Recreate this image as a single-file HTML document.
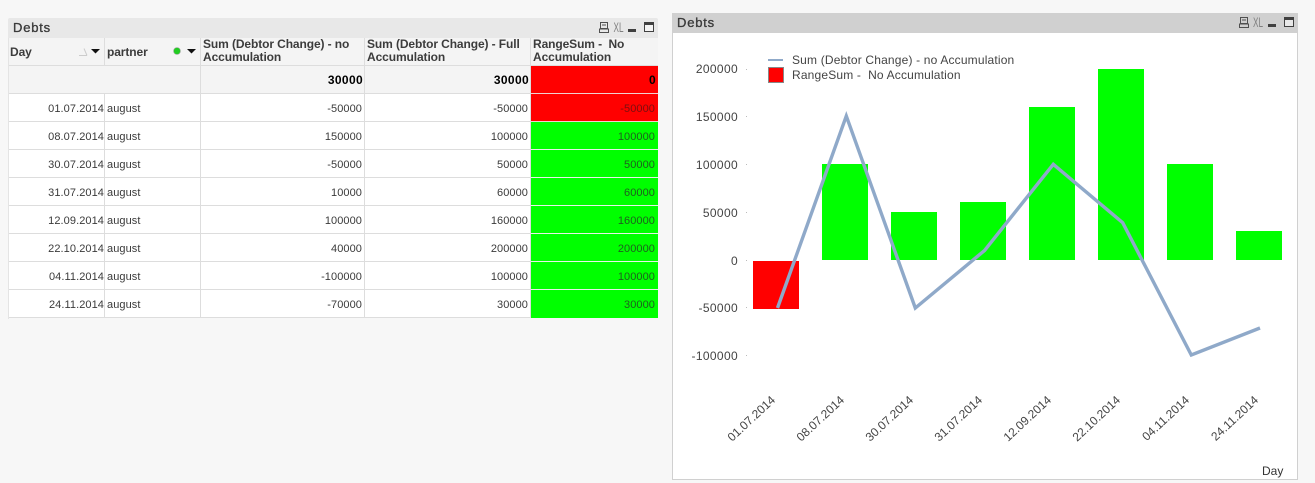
<!DOCTYPE html>
<html><head><meta charset="utf-8"><style>
html,body{margin:0;padding:0;width:1315px;height:483px;overflow:hidden;background:#f7f7f7}
body{position:relative;font-family:"Liberation Sans",sans-serif}
div{position:absolute;box-sizing:border-box;white-space:nowrap}
.t{font-size:13px;letter-spacing:.8px;color:#3a3a3a;font-weight:400;-webkit-text-stroke:.35px #3a3a3a}
.h{top:38px;height:27px;background:#f4f4f4;font-size:12px;letter-spacing:-.1px;font-weight:700;color:#3c3c3c;line-height:13px;padding:0 0 0 2px}
.c{height:28px;line-height:30px;font-size:11px;letter-spacing:.08px;color:#3a3a3a;text-align:right;padding-right:2px;background:#fff;border-bottom:1px solid #ddd;border-right:1px solid #ddd}
.s{background:#f4f4f4;font-weight:700;color:#000;font-size:12px;padding-right:1px;letter-spacing:.35px;line-height:29px}
.g{background:#0f0;color:#1f5f1f;border-right:0;border-bottom:1px solid #e8f0e8;padding-right:3px}
.r{background:#f00;color:#7a1010;border-right:0;border-bottom:1px solid #f0d0d0;padding-right:3px}
</style></head><body>
<div style="left:8px;top:18px;width:650px;height:20px;background:#e8e8e8;border-radius:2px 2px 0 0"></div>
<div class="t" style="left:13px;top:20px">Debts</div>
<svg style="position:absolute;left:596px;top:20px" width="62" height="14" viewBox="0 0 62 14">
<g fill="none" stroke="#505050" stroke-width="1"><rect x="4.500" y="2.500" width="7" height="6"/><path d="M6 5h4"/><path d="M3.500 12.500h9v-3.500h-9z"/></g>
<text x="17.500" y="12" font-family="Liberation Sans" font-size="14" fill="#808080" textLength="10" lengthAdjust="spacingAndGlyphs">XL</text>
<rect x="32" y="9" width="8" height="3" fill="#404040"/>
<rect x="48.500" y="2.500" width="9" height="9" fill="#f4f4f4" stroke="#404040"/><rect x="48" y="2" width="10" height="3" fill="#404040"/>
</svg>

<div class="h" style="left:8px;width:96px;line-height:28px">Day</div>
<div class="h" style="left:105px;width:95px;line-height:28px">partner</div>
<div class="h" style="left:201px;width:163px">Sum (Debtor Change) - no<br>Accumulation</div>
<div class="h" style="left:365px;width:165px">Sum (Debtor Change) - Full<br>Accumulation</div>
<div class="h" style="left:531px;width:127px">RangeSum -&nbsp; No<br>Accumulation</div>
<div style="left:8px;top:65px;width:650px;height:1px;background:#ddd"></div>
<div style="left:104px;top:38px;width:1px;height:28px;background:#ddd"></div>
<div style="left:200px;top:38px;width:1px;height:28px;background:#ddd"></div>
<div style="left:364px;top:38px;width:1px;height:28px;background:#ddd"></div>
<div style="left:530px;top:38px;width:1px;height:28px;background:#ddd"></div>
<svg style="position:absolute;left:78px;top:46px" width="120" height="12" viewBox="0 0 120 12">
<path d="M1 9.500h8M9 9.500l-3-7" fill="none" stroke="#ccc"/><path d="M13 3h9l-4.500 4.500z" fill="#111"/>
<circle cx="99" cy="5" r="3.500" fill="#22cc22" stroke="#aaa" stroke-width=".6"/><path d="M109 3h9l-4.500 4.500z" fill="#111"/></svg>

<div class="c s" style="left:8px;top:66px;width:193px"></div>
<div class="c s" style="left:201px;top:66px;width:164px">30000</div>
<div class="c s" style="left:365px;top:66px;width:166px">30000</div>
<div class="c s r" style="left:531px;top:66px;color:#000;padding-right:2px;width:127px">0</div>

<div class="c" style="left:8px;top:94px;width:97px;padding-right:0">01.07.2014</div><div class="c" style="left:105px;top:94px;width:96px;text-align:left;padding-left:2px">august</div><div class="c" style="left:201px;top:94px;width:164px">-50000</div><div class="c" style="left:365px;top:94px;width:166px">-50000</div><div class="c r" style="left:531px;top:94px;width:127px">-50000</div>
<div class="c" style="left:8px;top:122px;width:97px;padding-right:0">08.07.2014</div><div class="c" style="left:105px;top:122px;width:96px;text-align:left;padding-left:2px">august</div><div class="c" style="left:201px;top:122px;width:164px">150000</div><div class="c" style="left:365px;top:122px;width:166px">100000</div><div class="c g" style="left:531px;top:122px;width:127px">100000</div>
<div class="c" style="left:8px;top:150px;width:97px;padding-right:0">30.07.2014</div><div class="c" style="left:105px;top:150px;width:96px;text-align:left;padding-left:2px">august</div><div class="c" style="left:201px;top:150px;width:164px">-50000</div><div class="c" style="left:365px;top:150px;width:166px">50000</div><div class="c g" style="left:531px;top:150px;width:127px">50000</div>
<div class="c" style="left:8px;top:178px;width:97px;padding-right:0">31.07.2014</div><div class="c" style="left:105px;top:178px;width:96px;text-align:left;padding-left:2px">august</div><div class="c" style="left:201px;top:178px;width:164px">10000</div><div class="c" style="left:365px;top:178px;width:166px">60000</div><div class="c g" style="left:531px;top:178px;width:127px">60000</div>
<div class="c" style="left:8px;top:206px;width:97px;padding-right:0">12.09.2014</div><div class="c" style="left:105px;top:206px;width:96px;text-align:left;padding-left:2px">august</div><div class="c" style="left:201px;top:206px;width:164px">100000</div><div class="c" style="left:365px;top:206px;width:166px">160000</div><div class="c g" style="left:531px;top:206px;width:127px">160000</div>
<div class="c" style="left:8px;top:234px;width:97px;padding-right:0">22.10.2014</div><div class="c" style="left:105px;top:234px;width:96px;text-align:left;padding-left:2px">august</div><div class="c" style="left:201px;top:234px;width:164px">40000</div><div class="c" style="left:365px;top:234px;width:166px">200000</div><div class="c g" style="left:531px;top:234px;width:127px">200000</div>
<div class="c" style="left:8px;top:262px;width:97px;padding-right:0">04.11.2014</div><div class="c" style="left:105px;top:262px;width:96px;text-align:left;padding-left:2px">august</div><div class="c" style="left:201px;top:262px;width:164px">-100000</div><div class="c" style="left:365px;top:262px;width:166px">100000</div><div class="c g" style="left:531px;top:262px;width:127px">100000</div>
<div class="c" style="left:8px;top:290px;width:97px;padding-right:0">24.11.2014</div><div class="c" style="left:105px;top:290px;width:96px;text-align:left;padding-left:2px">august</div><div class="c" style="left:201px;top:290px;width:164px">-70000</div><div class="c" style="left:365px;top:290px;width:166px">30000</div><div class="c g" style="left:531px;top:290px;width:127px;border-bottom:0">30000</div>
<div style="left:8px;top:38px;width:1px;height:281px;background:#e4e4e4"></div>

<div style="left:672px;top:13px;width:626px;height:467px;background:#fff;border:1px solid #d0d0d0;border-top:0"></div>
<div style="left:673px;top:13px;width:624px;height:20px;background:#d0d0d0"></div>
<div class="t" style="left:677px;top:15px">Debts</div>
<svg style="position:absolute;left:1237px;top:15px" width="62" height="14" viewBox="0 0 62 14">
<g fill="none" stroke="#505050" stroke-width="1"><rect x="3.500" y="2.500" width="7" height="6"/><path d="M5 5h4"/><path d="M2.500 12.500h9v-3.500h-9z"/></g>
<text x="16" y="12" font-family="Liberation Sans" font-size="14" fill="#808080" textLength="10" lengthAdjust="spacingAndGlyphs">XL</text>
<rect x="31" y="9" width="8" height="3" fill="#404040"/>
<rect x="47.500" y="2.500" width="9" height="9" fill="#e8e8e8" stroke="#404040"/><rect x="47" y="2" width="10" height="3" fill="#404040"/>
</svg>

<svg style="position:absolute;left:0;top:0" width="1315" height="483" viewBox="0 0 1315 483" font-family="Liberation Sans" font-size="12" fill="#444">
<rect x="753" y="261" width="46" height="48" fill="#f00"/>
<rect x="822" y="164" width="46" height="96" fill="#0f0"/>
<rect x="891" y="212" width="46" height="48" fill="#0f0"/>
<rect x="960" y="202" width="46" height="58" fill="#0f0"/>
<rect x="1029" y="107" width="46" height="153" fill="#0f0"/>
<rect x="1098" y="69" width="46" height="191" fill="#0f0"/>
<rect x="1167" y="164" width="46" height="96" fill="#0f0"/>
<rect x="1236" y="231" width="46" height="29" fill="#0f0"/>
<polyline points="777.500,308 846.300,116 915.300,308 984.500,250.500 1053.300,164.300 1122.700,222.700 1191.300,355 1260,328" fill="none" stroke="#8fa9c9" stroke-width="3.400" stroke-linejoin="miter"/>
<g text-anchor="end" letter-spacing=".35">
<text x="738" y="73">200000</text><text x="738" y="121">150000</text><text x="738" y="169">100000</text><text x="738" y="217">50000</text><text x="738" y="265">0</text><text x="738" y="312">-50000</text><text x="738" y="360">-100000</text>
</g>
<g fill="#bbb"><rect x="746" y="69" width="1" height="1"/><rect x="746" y="116" width="1" height="1"/><rect x="746" y="164" width="1" height="1"/><rect x="746" y="212" width="1" height="1"/><rect x="746" y="260" width="1" height="1"/><rect x="746" y="307" width="1" height="1"/><rect x="746" y="355" width="1" height="1"/></g>
<rect x="768" y="59" width="15" height="2" fill="#8fa9c9"/>
<rect x="768.500" y="67.500" width="15" height="15" fill="#f00" stroke="#888"/>
<text x="792" y="64" letter-spacing=".17">Sum (Debtor Change) - no Accumulation</text>
<text x="792" y="79" letter-spacing=".17">RangeSum -&#160; No Accumulation</text>
<g text-anchor="end">
<text transform="translate(776,401) rotate(-43)">01.07.2014</text>
<text transform="translate(845,401) rotate(-43)">08.07.2014</text>
<text transform="translate(914,401) rotate(-43)">30.07.2014</text>
<text transform="translate(983,401) rotate(-43)">31.07.2014</text>
<text transform="translate(1052,401) rotate(-43)">12.09.2014</text>
<text transform="translate(1121,401) rotate(-43)">22.10.2014</text>
<text transform="translate(1190,401) rotate(-43)">04.11.2014</text>
<text transform="translate(1259,401) rotate(-43)">24.11.2014</text>
</g>
<text x="1262" y="475" fill="#333">Day</text>
</svg>
</body></html>
